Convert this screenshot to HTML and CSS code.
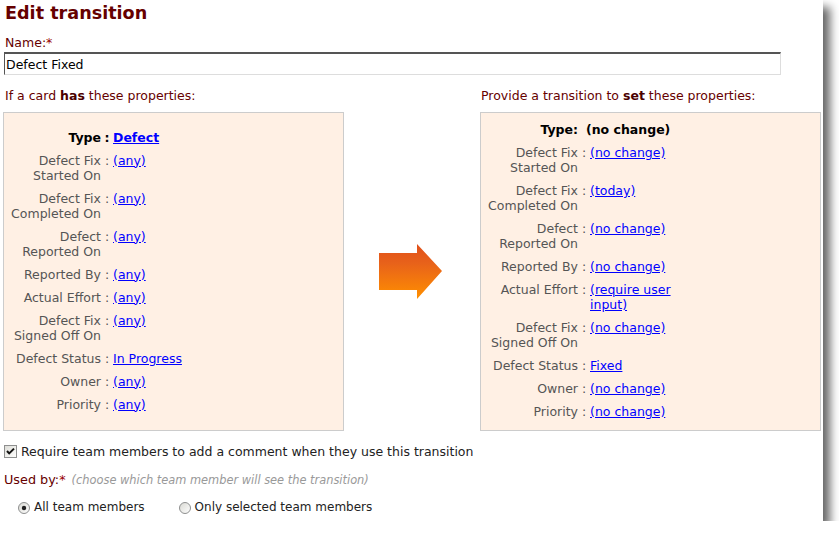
FILE: index.html
```html
<!DOCTYPE html>
<html>
<head>
<meta charset="utf-8">
<title>Edit transition</title>
<link rel="stylesheet" href="styles.css">
</head>
<body>
<div class="page">
  <h1 class="title">Edit transition</h1>
  <div class="field-label">Name:<span class="req">*</span></div>
  <input class="name-input" type="text" value="Defect Fixed">

  <div class="columns">
    <div class="col-head left-head">If a card <b>has</b> these properties:</div>
    <div></div>
    <div class="col-head right-head">Provide a transition to <b>set</b> these properties:</div>

    <div class="box">
      <div class="props">
        <div class="row type"><span class="lbl">Type</span><span class="colon">:</span><span class="val"><a href="#" class="bold-link">Defect</a></span></div>
        <div class="row"><span class="lbl">Defect Fix Started On</span><span class="colon">:</span><span class="val"><a href="#">(any)</a></span></div>
        <div class="row"><span class="lbl">Defect Fix Completed On</span><span class="colon">:</span><span class="val"><a href="#">(any)</a></span></div>
        <div class="row"><span class="lbl">Defect Reported On</span><span class="colon">:</span><span class="val"><a href="#">(any)</a></span></div>
        <div class="row"><span class="lbl">Reported By</span><span class="colon">:</span><span class="val"><a href="#">(any)</a></span></div>
        <div class="row"><span class="lbl">Actual Effort</span><span class="colon">:</span><span class="val"><a href="#">(any)</a></span></div>
        <div class="row"><span class="lbl">Defect Fix Signed Off On</span><span class="colon">:</span><span class="val"><a href="#">(any)</a></span></div>
        <div class="row"><span class="lbl">Defect Status</span><span class="colon">:</span><span class="val"><a href="#">In Progress</a></span></div>
        <div class="row"><span class="lbl">Owner</span><span class="colon">:</span><span class="val"><a href="#">(any)</a></span></div>
        <div class="row"><span class="lbl">Priority</span><span class="colon">:</span><span class="val"><a href="#">(any)</a></span></div>
      </div>
    </div>

    <div class="arrow-cell">
      <svg class="arrow" width="64" height="56" viewBox="0 0 64 56">
        <defs>
          <linearGradient id="ag" x1="0" y1="0" x2="0" y2="1">
            <stop offset="0" stop-color="#e04f1a"/>
            <stop offset="0.35" stop-color="#e8621a"/>
            <stop offset="1" stop-color="#ff9000"/>
          </linearGradient>
        </defs>
        <polygon points="0,9 38,9 38,0 63,27 38,55 38,46 0,46" fill="url(#ag)"/>
      </svg>
    </div>

    <div class="box">
      <div class="props">
        <div class="row type set-type"><span class="lbl">Type:</span><span class="colon"></span><span class="val">(no change)</span></div>
        <div class="row"><span class="lbl">Defect Fix Started On</span><span class="colon">:</span><span class="val"><a href="#">(no change)</a></span></div>
        <div class="row"><span class="lbl">Defect Fix Completed On</span><span class="colon">:</span><span class="val"><a href="#">(today)</a></span></div>
        <div class="row"><span class="lbl">Defect Reported On</span><span class="colon">:</span><span class="val"><a href="#">(no change)</a></span></div>
        <div class="row"><span class="lbl">Reported By</span><span class="colon">:</span><span class="val"><a href="#">(no change)</a></span></div>
        <div class="row"><span class="lbl">Actual Effort</span><span class="colon">:</span><span class="val"><a href="#">(require user input)</a></span></div>
        <div class="row"><span class="lbl">Defect Fix Signed Off On</span><span class="colon">:</span><span class="val"><a href="#">(no change)</a></span></div>
        <div class="row"><span class="lbl">Defect Status</span><span class="colon">:</span><span class="val"><a href="#">Fixed</a></span></div>
        <div class="row"><span class="lbl">Owner</span><span class="colon">:</span><span class="val"><a href="#">(no change)</a></span></div>
        <div class="row"><span class="lbl">Priority</span><span class="colon">:</span><span class="val"><a href="#">(no change)</a></span></div>
      </div>
    </div>
  </div>

  <label class="check-row">
    <svg class="checkbox" width="13" height="13" viewBox="0 0 13 13">
      <defs>
        <linearGradient id="cb" x1="0" y1="0" x2="1" y2="1">
          <stop offset="0" stop-color="#dcdcd6"/>
          <stop offset="1" stop-color="#ffffff"/>
        </linearGradient>
      </defs>
      <rect x="0.5" y="0.5" width="12" height="12" fill="url(#cb)" stroke="#8e8f8f"/>
      <path d="M3 6 L5.2 8.4 L10 3.6" fill="none" stroke="#111" stroke-width="2"/>
    </svg>
    <span>Require team members to add a comment when they use this transition</span>
  </label>

  <div class="used-row"><span class="field-label inline">Used by:<span class="req">*</span></span><span class="hint">(choose which team member will see the transition)</span></div>

  <div class="radio-row">
    <label class="radio">
      <svg width="12" height="12" viewBox="0 0 12 12">
        <defs>
          <linearGradient id="rg" x1="0" y1="0" x2="1" y2="1">
            <stop offset="0" stop-color="#d8d8d2"/>
            <stop offset="1" stop-color="#ffffff"/>
          </linearGradient>
        </defs>
        <circle cx="6" cy="6" r="5.5" fill="url(#rg)" stroke="#8e8f8f"/>
        <circle cx="6" cy="6" r="2.2" fill="#222"/>
      </svg>
      <span>All team members</span>
    </label>
    <label class="radio">
      <svg width="12" height="12" viewBox="0 0 12 12">
        <circle cx="6" cy="6" r="5.5" fill="url(#rg)" stroke="#8e8f8f"/>
      </svg>
      <span>Only selected team members</span>
    </label>
  </div>
</div>
</body>
</html>
```
FILE: styles.css
```css
html, body {
  margin: 0;
  padding: 0;
  background: #ffffff;
}

body {
  font-family: "DejaVu Sans", Verdana, sans-serif;
  font-size: 12.5px;
  line-height: 15px;
  color: #222;
}

.page {
  width: 823px;
  height: 521px;
  background: #ffffff;
  box-shadow: 7px 7px 9px rgba(0, 0, 0, 0.6);
  padding-left: 3px;
  box-sizing: border-box;
  overflow: hidden;
}

.title {
  margin: 0;
  padding: 2px 0 0 2px;
  font-size: 17.6px;
  line-height: 22px;
  font-weight: bold;
  color: #660000;
}

.field-label {
  color: #660000;
  margin: 11px 0 0 2px;
}

.field-label.inline {
  margin: 0;
  font-size: 12.8px;
}

.req {
  color: #990000;
}

.name-input {
  display: block;
  width: 777px;
  height: 23px;
  margin: 2px 0 0 1px;
  padding: 0 0 0 1px;
  box-sizing: border-box;
  font-family: "DejaVu Sans", Verdana, sans-serif;
  font-size: 12.5px;
  color: #000;
  border-style: solid;
  border-width: 1px;
  border-color: #555 #ddd #ddd #555;
  border-top-width: 2px;
  outline: none;
  background: #fff;
}

.columns {
  display: grid;
  grid-template-columns: 341px 136px 341px;
  margin-top: 13px;
}

.col-head {
  color: #660000;
  margin-bottom: 9px;
}

.col-head b {
  color: #4a0000;
}

.left-head {
  padding-left: 2px;
}

.right-head {
  padding-left: 1px;
}

.box {
  background: #fff0e4;
  border: 1px solid #cccccc;
  display: flex;
  flex-direction: column;
  justify-content: center;
  padding: 6px 0;
}

.props {
  position: relative;
  top: -1px;
}

.row {
  display: grid;
  grid-template-columns: 93px 12px 112px;
  padding: 4px 0 4px 4px;
  color: #555;
}

.lbl {
  text-align: right;
}

.colon {
  text-align: center;
}

.val a {
  color: #0000ff;
  text-decoration: underline;
}

.row.type {
  color: #000;
  font-weight: bold;
}

.set-type .val {
  margin-left: -4px;
}

.bold-link {
  font-weight: bold;
}

.arrow-cell {
  display: flex;
  align-items: center;
  justify-content: center;
  padding-right: 3px;
}

.arrow {
  display: block;
}

.check-row {
  display: flex;
  align-items: center;
  gap: 4px;
  margin: 13px 0 0 1px;
  color: #222;
}

.checkbox {
  display: block;
  flex: none;
}

.used-row {
  margin: 13px 0 0 1px;
}

.hint {
  color: #999;
  font-style: italic;
  font-size: 11.4px;
  margin-left: 6px;
}

.radio-row {
  display: flex;
  gap: 34px;
  margin: 12px 0 0 15px;
  font-size: 12px;
}

.radio {
  display: flex;
  align-items: center;
  gap: 4px;
  color: #222;
}

.radio svg {
  display: block;
  flex: none;
}
```
